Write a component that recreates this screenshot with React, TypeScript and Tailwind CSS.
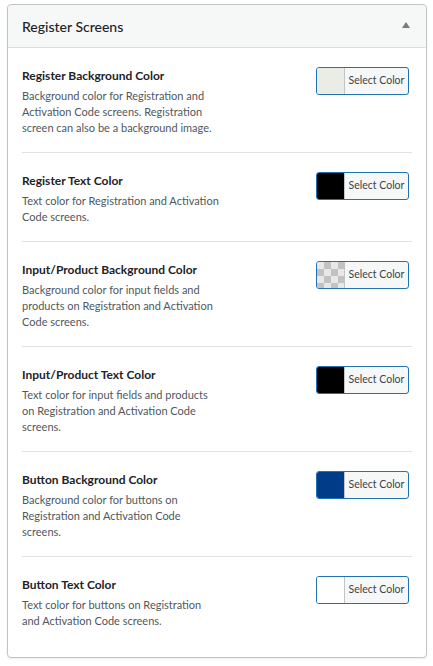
import React from 'react';

type ColorSetting = {
  title: string;
  description: string[];
  swatch: string;
};

// description lines kept as in the original wrap
const settings: ColorSetting[] = [
  {
    title: 'Register Background Color',
    description: [
      'Background color for Registration and',
      'Activation Code screens. Registration',
      'screen can also be a background image.',
    ],
    swatch: '#eaede6',
  },
  {
    title: 'Register Text Color',
    description: ['Text color for Registration and Activation', 'Code screens.'],
    swatch: '#000000',
  },
  {
    title: 'Input/Product Background Color',
    description: ['Background color for input fields and', 'products on Registration and Activation', 'Code screens.'],
    swatch: 'transparent',
  },
  {
    title: 'Input/Product Text Color',
    description: ['Text color for input fields and products', 'on Registration and Activation Code', 'screens.'],
    swatch: '#000000',
  },
  {
    title: 'Button Background Color',
    description: ['Background color for buttons on', 'Registration and Activation Code', 'screens.'],
    swatch: '#003c88',
  },
  {
    title: 'Button Text Color',
    description: ['Text color for buttons on Registration', 'and Activation Code screens.'],
    swatch: '#ffffff',
  },
];

const Checker: React.FC = () => (
  <svg width="100%" height="100%" className="block">
    <defs>
      <pattern id="checker" width="14" height="14" patternUnits="userSpaceOnUse">
        <rect width="14" height="14" fill="#e8e8e8" />
        <rect x="7" width="7" height="7" fill="#c2c2c2" />
        <rect y="7" width="7" height="7" fill="#c2c2c2" />
      </pattern>
    </defs>
    <rect width="100%" height="100%" fill="url(#checker)" />
  </svg>
);

const ColorButton: React.FC<{ swatch: string }> = ({ swatch }) => (
  <button
    type="button"
    className="-mt-px flex h-[28px] w-[93px] shrink-0 overflow-hidden rounded-[3px] border border-[#2271b1] bg-[#f6f7f7]"
  >
    <span
      className="block h-full w-[28px] shrink-0 border-r border-[#c3c4c7]"
      style={swatch === 'transparent' ? undefined : { backgroundColor: swatch }}
    >
      {swatch === 'transparent' && <Checker />}
    </span>
    <span className="flex h-full flex-1 items-center justify-center whitespace-nowrap text-[10.5px] text-[#3c434a]">
      Select Color
    </span>
  </button>
);

export default function App() {
  return (
    <div className="min-h-screen bg-white pl-[7px] pt-[4px]" style={{ fontFamily: 'Lato, "Noto Sans", sans-serif' }}>
      <div className="w-[420px] rounded-[4px] border border-[#c3c4c7] bg-white shadow-[0_1px_2px_rgba(0,0,0,0.08)]">
        <div className="flex h-[43px] items-center justify-between rounded-t-[4px] border-b border-[#dcdcde] bg-[#f6f7f7] pl-[14px] pr-[16px]">
          <h2 className="text-[14px] font-medium text-[#1d2327]">Register Screens</h2>
          <svg width="8" height="6" viewBox="0 0 8 6" className="-mt-[3px]">
            <path d="M0 6 L4 0 L8 6 Z" fill="#787c82" />
          </svg>
        </div>
        <div className="px-[14px] pb-3">
          {settings.map((s, i) => (
            <div
              key={s.title}
              className={`flex items-start justify-between pr-[3px] pt-5 pb-4 ${i < settings.length - 1 ? 'border-b border-[#e2e2e2]' : ''}`}
            >
              <div>
                <h3 className="text-[12px] font-bold leading-[16px] text-[#1d2327]">{s.title}</h3>
                <p className="mt-1 text-[11px] leading-[16px] text-[#50575e]">
                  {s.description.map((line, j) => (
                    <React.Fragment key={j}>
                      {line}
                      {j < s.description.length - 1 && <br />}
                    </React.Fragment>
                  ))}
                </p>
              </div>
              <ColorButton swatch={s.swatch} />
            </div>
          ))}
        </div>
      </div>
    </div>
  );
}
